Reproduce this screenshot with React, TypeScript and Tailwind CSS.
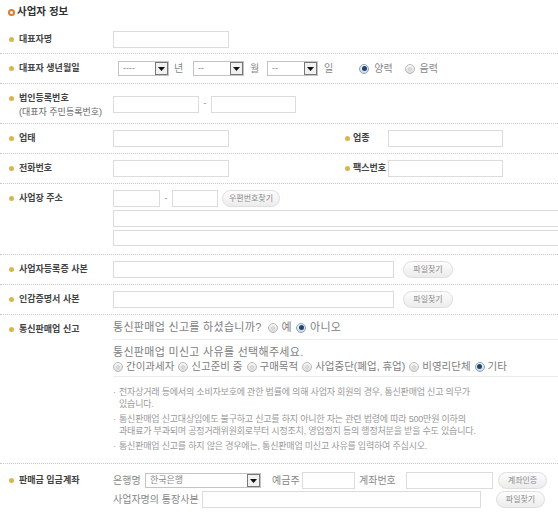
import React from "react";

const Dot = () => <span className="w-[5px] h-[5px] rounded-full bg-[#d8b64e] shrink-0" />;

function Label({ children, sub }: { children: React.ReactNode; sub?: string }) {
  return (
    <div className="w-[113px] shrink-0 pl-[9px] flex flex-col">
      <div className="h-[17px] flex items-center gap-[5px]">
        <Dot />
        <span className="text-[9px] font-bold text-[#444] whitespace-nowrap">{children}</span>
      </div>
      {sub && <span className="pl-[10px] text-[9px] text-[#666] whitespace-nowrap leading-[11px]">{sub}</span>}
    </div>
  );
}

function Input({ w, h = "h-[17px]" }: { w: string; h?: string }) {
  return <div className={`${w} ${h} border border-[#dcdcdc] bg-white shrink-0`} />;
}

function Btn({ children, w }: { children: React.ReactNode; w: string }) {
  return (
    <div
      className={`${w} h-[17px] shrink-0 rounded-full border border-[#dedede] bg-gradient-to-b from-[#fdfdfd] to-[#ececec] flex items-center justify-center text-[8px] text-[#8a8a8a] whitespace-nowrap`}
    >
      {children}
    </div>
  );
}

function Select({ w, text }: { w: string; text: string }) {
  return (
    <div className={`${w} h-[15px] shrink-0 border border-[#c4c4c4] bg-white flex items-center justify-between pl-[4px]`}>
      <span className="text-[9px] text-[#888] leading-none">{text}</span>
      <div className="w-[13px] h-[13px] border border-[#777] bg-[#f1f1f1] flex items-center justify-center">
        <svg width="7" height="4" viewBox="0 0 7 4">
          <path d="M0 0H7L3.5 4Z" fill="#111" />
        </svg>
      </div>
    </div>
  );
}

function Radio({ on }: { on?: boolean }) {
  return (
    <span
      className={`w-[10px] h-[10px] rounded-full shrink-0 flex items-center justify-center border ${
        on ? "border-[#8fa3bb] bg-gradient-to-b from-[#f3f6fa] to-[#cfd9e6]" : "border-[#b9b9b9] bg-gradient-to-b from-[#fafafa] to-[#dcdcdc]"
      }`}
    >
      {on ? <span className="w-[5px] h-[5px] rounded-full bg-[#23466f]" /> : <span className="w-[4px] h-[4px] rounded-full bg-[#e4e4e4] border border-[#cfcfcf]" />}
    </span>
  );
}

const Row = ({ children, className = "" }: { children: React.ReactNode; className?: string }) => (
  <div className={`flex border-b border-dotted border-[#c9c9c9] ${className}`}>{children}</div>
);

export default function App() {
  return (
    <div className="w-[558px] h-[523px] overflow-hidden bg-white font-['Liberation_Sans','Noto_Sans_CJK_KR',sans-serif]">
      <div className="h-[24px] flex items-center pl-[8px] gap-[2px]">
        <span className="w-[7px] h-[7px] rounded-full border-[2px] border-[#e0782a]" />
        <span className="text-[10.5px] font-bold text-[#333]">사업자 정보</span>
      </div>

      {/* 대표자명 */}
      <Row className="pt-[7px] pb-[5px]">
        <Label>대표자명</Label>
        <Input w="w-[116px]" />
      </Row>

      {/* 생년월일 */}
      <Row className="py-[6px]">
        <Label>대표자 생년월일</Label>
        <div className="flex items-center h-[17px] pl-[5px] text-[10px] text-[#888]">
          <Select w="w-[51px]" text="----" />
          <span className="ml-[5px] w-[19px]">년</span>
          <Select w="w-[51px]" text="--" />
          <span className="ml-[6px] w-[17px]">월</span>
          <Select w="w-[51px]" text="--" />
          <span className="ml-[6px]">일</span>
          <span className="ml-[26px] flex items-center gap-[5px]">
            <Radio on /> 양력
          </span>
          <span className="ml-[12px] flex items-center gap-[5px]">
            <Radio /> 음력
          </span>
        </div>
      </Row>

      {/* 법인등록번호 */}
      <Row className="pt-[6px] pb-[5px] items-center">
        <Label sub="(대표자 주민등록번호)">법인등록번호</Label>
        <div className="flex items-center">
          <Input w="w-[86px]" />
          <span className="w-[12px] text-center text-[9px] text-[#888]">-</span>
          <Input w="w-[85px]" />
        </div>
      </Row>

      {/* 업태 / 업종 */}
      <Row className="py-[6px]">
        <Label>업태</Label>
        <Input w="w-[116px]" />
        <div className="ml-[116px] w-[43px] h-[17px] flex items-center gap-[3px]">
          <Dot />
          <span className="text-[9px] font-bold text-[#444]">업종</span>
        </div>
        <Input w="w-[115px]" />
      </Row>

      {/* 전화번호 / 팩스번호 */}
      <Row className="py-[6px]">
        <Label>전화번호</Label>
        <Input w="w-[116px]" />
        <div className="ml-[116px] w-[43px] h-[17px] flex items-center gap-[3px]">
          <Dot />
          <span className="text-[9px] font-bold text-[#444]">팩스번호</span>
        </div>
        <Input w="w-[115px]" />
      </Row>

      {/* 사업장 주소 */}
      <Row className="pt-[6px] pb-[8px]">
        <Label>사업장 주소</Label>
        <div className="flex flex-col gap-[3px] flex-1">
          <div className="flex items-center">
            <Input w="w-[47px]" />
            <span className="w-[12px] text-center text-[9px] text-[#888]">-</span>
            <Input w="w-[46px]" />
            <div className="ml-[4px]">
              <Btn w="w-[58px]">우편번호찾기</Btn>
            </div>
          </div>
          <div className="h-[17px] border border-[#dcdcdc] border-r-0" />
          <div className="h-[16px] border border-[#dcdcdc] border-r-0" />
        </div>
      </Row>

      {/* 사업자등록증 사본 */}
      <Row className="py-[6px]">
        <Label>사업자등록증 사본</Label>
        <Input w="w-[281px]" />
        <div className="ml-[9px]">
          <Btn w="w-[50px]">파일찾기</Btn>
        </div>
      </Row>

      {/* 인감증명서 사본 */}
      <Row className="py-[6px]">
        <Label>인감증명서 사본</Label>
        <Input w="w-[281px]" />
        <div className="ml-[9px]">
          <Btn w="w-[50px]">파일찾기</Btn>
        </div>
      </Row>

      {/* 통신판매업 신고 */}
      <Row className="pt-[6px] pb-[11px]">
        <Label>통신판매업 신고</Label>
        <div className="flex-1 flex flex-col text-[11px] text-[#808080]">
          <div className="h-[13px] flex items-center whitespace-nowrap tracking-[0.3px]">
            <span>통신판매업 신고를 하셨습니까?</span>
            <span className="ml-[6px] flex items-center gap-[4px]">
              <Radio />
              <span>예</span>
            </span>
            <span className="ml-[4px] flex items-center gap-[4px]">
              <Radio on />
              <span>아니오</span>
            </span>
          </div>
          <div className="mt-[5px] border-t border-[#ececec]" />
          <div className="mt-[6px] h-[13px] flex items-center whitespace-nowrap tracking-[0.3px]">통신판매업 미신고 사유를 선택해주세요.</div>
          <div className="mt-[1px] h-[13px] flex items-center whitespace-nowrap text-[10.5px]">
            {[
              ["간이과세자", false],
              ["신고준비 중", false],
              ["구매목적", false],
              ["사업중단(폐업, 휴업)", false],
              ["비영리단체", false],
              ["기타", true],
            ].map(([t, on], i) => (
              <span key={i} className="flex items-center gap-[3px] mr-[4px]">
                <Radio on={on as boolean} />
                <span>{t as string}</span>
              </span>
            ))}
          </div>
          <div className="mt-[3px] border-t border-[#ececec]" />
          <div className="mt-[9px] flex flex-col gap-[3px] text-[9px] leading-[12px] text-[#999] tracking-[-0.2px]">
            <div className="flex">
              <span className="w-[6px] shrink-0">·</span>
              <span>
                전자상거래 등에서의 소비자보호에 관한 법률에 의해 사업자 회원의 경우, 통신판매업 신고 의무가
                <br />
                있습니다.
              </span>
            </div>
            <div className="flex">
              <span className="w-[6px] shrink-0">·</span>
              <span>
                통신판매업 신고대상임에도 불구하고 신고를 하지 아니한 자는 관련 법령에 따라 500만원 이하의
                <br />
                과태료가 부과되며 공정거래위원회로부터 시정조치, 영업정지 등의 행정처분을 받을 수도 있습니다.
              </span>
            </div>
            <div className="flex">
              <span className="w-[6px] shrink-0">·</span>
              <span>통신판매업 신고를 하지 않은 경우에는, 통신판매업 미신고 사유를 입력하여 주십시오.</span>
            </div>
          </div>
        </div>
      </Row>

      {/* 판매금 입금계좌 */}
      <div className="flex pt-[8px]">
        <Label>판매금 입금계좌</Label>
        <div className="flex flex-col gap-[2px] text-[10px] text-[#888]">
          <div className="flex items-center h-[17px] whitespace-nowrap">
            <span className="w-[32px]">은행명</span>
            <Select w="w-[116px]" text="한국은행" />
            <span className="ml-[11px] w-[30px]">예금주</span>
            <Input w="w-[53px]" />
            <span className="ml-[4px] w-[47px]">계좌번호</span>
            <Input w="w-[87px]" />
            <div className="ml-[5px]">
              <Btn w="w-[49px]">계좌인증</Btn>
            </div>
          </div>
          <div className="flex items-center h-[17px] whitespace-nowrap">
            <span className="w-[89px]">사업자명의 통장사본</span>
            <Input w="w-[279px]" />
            <div className="ml-[15px]">
              <Btn w="w-[49px]">파일찾기</Btn>
            </div>
          </div>
        </div>
      </div>
    </div>
  );
}
